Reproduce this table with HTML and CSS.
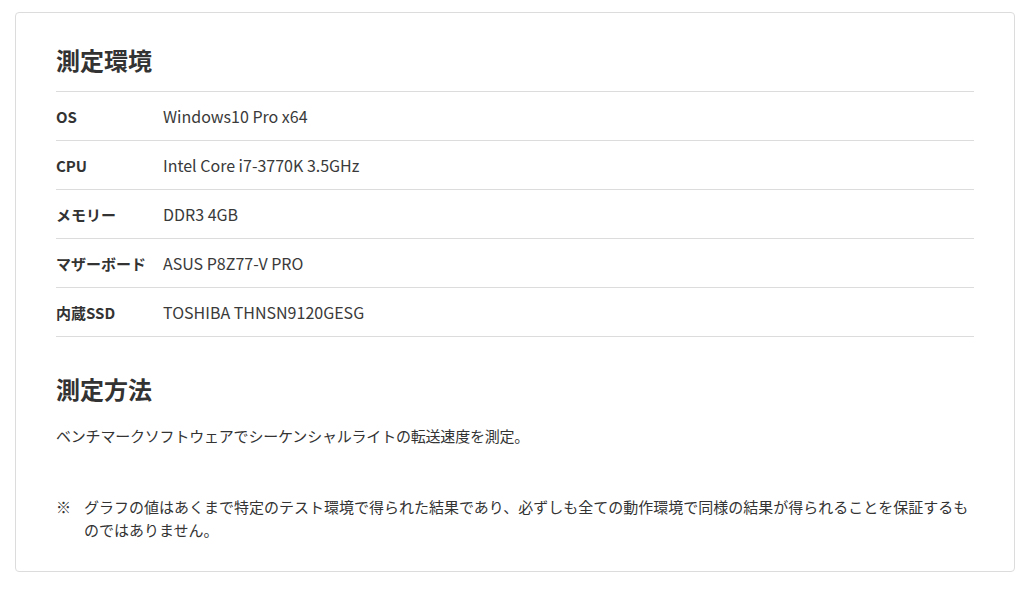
FILE: index.html
```html
<!DOCTYPE html>
<html lang="ja">
<head>
<meta charset="utf-8">
<link rel="stylesheet" href="styles.css">
</head>
<body>
<div class="card">
  <h2 class="title">測定環境</h2>
  <table class="spec">
    <tr><th>OS</th><td>Windows10 Pro x64</td></tr>
    <tr><th>CPU</th><td>Intel Core i7-3770K 3.5GHz</td></tr>
    <tr><th>メモリー</th><td>DDR3 4GB</td></tr>
    <tr><th>マザーボード</th><td>ASUS P8Z77-V PRO</td></tr>
    <tr><th>内蔵SSD</th><td>TOSHIBA THNSN9120GESG</td></tr>
  </table>
  <h2 class="title title-2">測定方法</h2>
  <p class="desc">ベンチマークソフトウェアでシーケンシャルライトの転送速度を測定。</p>
  <div class="note">
    <span class="mark">※</span>
    <p class="note-text">グラフの値はあくまで特定のテスト環境で得られた結果であり、必ずしも全ての動作環境で同様の結果が得られることを保証するものではありません。</p>
  </div>
</div>
</body>
</html>
```
FILE: styles.css
```css
html, body {
  margin: 0;
  padding: 0;
  background: #fff;
}
body {
  padding: 12px 0 0 15px;
  font-family: "Noto Sans CJK JP", "Noto Sans", sans-serif;
  color: #333;
}
.card {
  width: 1000px;
  box-sizing: border-box;
  border: 1px solid #dcdcdc;
  border-radius: 4px;
  padding: 29px 40px 30px;
}
.title {
  margin: 0 0 13px;
  font-size: 24px;
  line-height: 36px;
  font-weight: 700;
}
.title-2 {
  margin-top: 34px;
  margin-bottom: 17px;
}
.spec {
  width: 100%;
  border-collapse: collapse;
  border-top: 1px solid #dcdcdc;
  font-size: 15px;
  line-height: 22px;
}
.spec tr {
  border-bottom: 1px solid #dcdcdc;
}
.spec th {
  width: 107px;
  text-align: left;
  font-weight: 700;
  height: 48px;
  padding: 2px 0 0;
  box-sizing: border-box;
  white-space: nowrap;
}
.spec td {
  padding: 0;
  height: 48px;
  font-size: 16px;
  color: #3a3a3a;
}
.desc {
  margin: 0;
  font-size: 15px;
  line-height: 23px;
  letter-spacing: -0.2px;
}
.note {
  display: flex;
  margin-top: 48px;
  font-size: 15px;
  line-height: 23px;
}
.mark {
  width: 28px;
  flex: none;
}
.note-text {
  margin: 0;
}
```
